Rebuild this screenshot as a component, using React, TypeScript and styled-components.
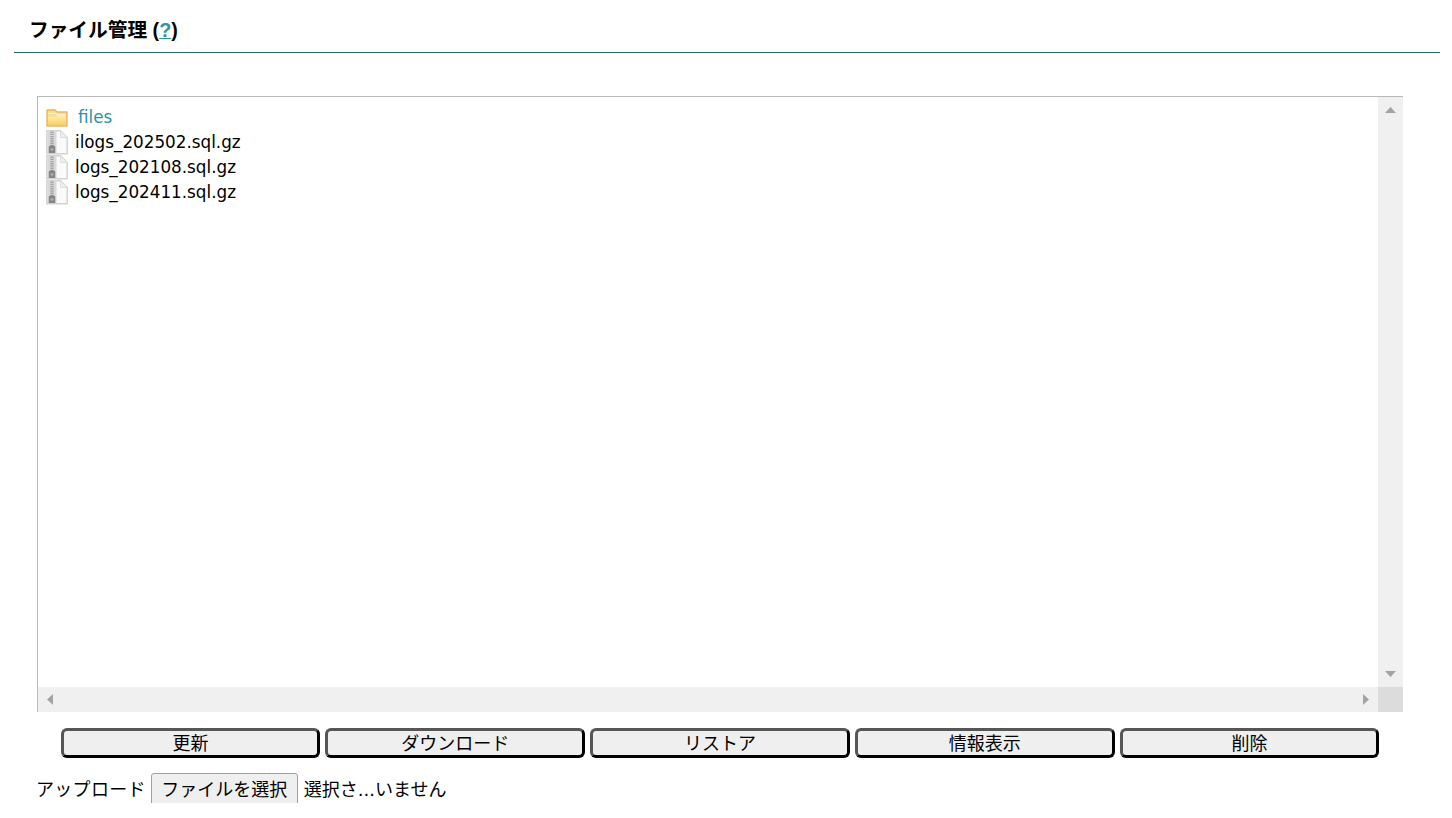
import React from "react";
import styled, { createGlobalStyle } from "styled-components";

const FONT = `"DejaVu Sans", Verdana, "Noto Sans CJK JP", sans-serif`;
const JP = `"Noto Sans CJK JP", "Liberation Sans", sans-serif`;

const Global = createGlobalStyle`
  html, body { margin: 0; padding: 0; background: #fff; overflow: hidden; }
  body { font-family: ${FONT}; color: #000; }
`;

const Page = styled.div`
  width: 1440px;
  height: 818px;
  overflow: hidden;
`;

const Heading = styled.h1`
  margin: 0 0 0 14px;
  height: 52px;
  box-sizing: content-box;
  padding: 0 0 0 15px;
  border-bottom: 1px solid #1f6f68;
  font: 700 19.7px/60px "Liberation Sans", ${JP};
`;

const HelpLink = styled.a`
  color: #2a97a5;
  text-decoration: underline;
`;

const Content = styled.div`
  padding: 43px 37px 0;
  width: 1366px;
`;

const Browser = styled.div`
  display: grid;
  grid-template-columns: 1fr 25px;
  grid-template-rows: 1fr 25px;
  height: 616px;
  box-sizing: border-box;
  border-top: 1px solid #b9b9b9;
  border-left: 1px solid #b9b9b9;
`;

const FileList = styled.ul`
  list-style: none;
  margin: 0;
  padding: 8px 0 0 8px;
`;

const Row = styled.li`
  display: flex;
  align-items: center;
  height: 25px;
  font: 400 16.8px/25px ${FONT};
`;

const FolderName = styled.a`
  margin-left: 10px;
  color: #2a95a3;
`;

const FileName = styled.span`
  margin-left: 7px;
`;

const VBar = styled.div`
  background: #f0f0f0;
  display: flex;
  flex-direction: column;
  justify-content: space-between;
  align-items: center;
  padding: 10px 0 10px;
`;

const HBar = styled.div`
  background: #f0f0f0;
  display: flex;
  justify-content: space-between;
  align-items: center;
  padding: 0 9px;
`;

const Corner = styled.div`
  background: #dcdcdc;
`;

const Buttons = styled.div`
  display: grid;
  grid-template-columns: repeat(5, 259.75px);
  column-gap: 5px;
  padding: 16px 0 0 23.6px;
`;

const ActionButton = styled.button`
  height: 30px;
  padding: 0 0 2px;
  box-sizing: border-box;
  background: #efefef;
  border-style: solid;
  border-width: 3px;
  border-color: #565656 #000 #000 #565656;
  border-radius: 6px;
  font: 400 18px/22px ${JP};
  color: #000;
`;

const Upload = styled.div`
  display: flex;
  align-items: flex-start;
  height: 30px;
  margin-top: 15px;
  overflow: hidden;
  font: 400 18px/30px ${JP};
`;

const UploadLabel = styled.span`
  margin-left: -1px;
  letter-spacing: 0.3px;
`;

const UploadButton = styled.button`
  height: 34px;
  margin: 0 6px 0 5px;
  padding: 0 0 4px;
  width: 147px;
  background: #efefef;
  border: 1px solid #a0a0a0;
  border-radius: 3px;
  font: 400 18px/26px ${JP};
  color: #000;
`;

const UploadStatus = styled.span`
  font-family: ${FONT};
  line-height: 34px;
`;

const Arrow = ({ dir }: { dir: "up" | "down" | "left" | "right" }) => {
  const d = { up: "M5.5 0L11 6H0Z", down: "M0 0H11L5.5 6Z", left: "M6 0V11L0 5.5Z", right: "M0 0V11L6 5.5Z" }[dir];
  const vertical = dir === "up" || dir === "down";
  return (
    <svg width={vertical ? 11 : 6} height={vertical ? 6 : 11} viewBox={vertical ? "0 0 11 6" : "0 0 6 11"}>
      <path d={d} fill="#a3a3a3" />
    </svg>
  );
};

const FolderIcon = () => (
  <svg width="22" height="18" viewBox="0 0 22 18">
    <defs>
      <linearGradient id="fold" x1="0" y1="0" x2="0" y2="1">
        <stop offset="0" stopColor="#fdf0b8" />
        <stop offset="1" stopColor="#f9d064" />
      </linearGradient>
    </defs>
    <path d="M1 1H9L11 3H21V17H1Z" fill="#f8dc98" stroke="#efb25f" strokeWidth="1.4" strokeLinejoin="round" />
    <path d="M2 8H10L12 6H20V16H2Z" fill="url(#fold)" />
    <path d="M2.2 4.5H9.5L11 5.5H19.8" stroke="#fdf3d2" strokeWidth="1.2" fill="none" />
  </svg>
);

const ZipIcon = () => (
  <svg width="22" height="25" viewBox="0 0 22 25">
    <path d="M0.8 0.8H14.5L21.2 7.5V23.8H0.8Z" fill="#fafafa" stroke="#d2d2d2" strokeWidth="1.4" />
    <path d="M14.5 1V7.5H21" fill="#efefef" stroke="#dedede" />
    <path d="M1.5 1.5H10.5V23H1.5Z" fill="#d9d9d9" />
    <path d="M6 1.5V15" stroke="#a6a6a6" strokeWidth="3.4" strokeDasharray="1.4 0.8" />
    <path d="M2.8 17C2.8 16 4 15 6 15C8 15 9.2 16 9.2 17V23H2.8Z" fill="#858585" />
    <path d="M4.6 18.5H7.4V20.5H4.6Z" fill="#b5b5b5" />
  </svg>
);

const files = ["ilogs_202502.sql.gz", "logs_202108.sql.gz", "logs_202411.sql.gz"];
const actions = ["更新", "ダウンロード", "リストア", "情報表示", "削除"];

export default function App() {
  return (
    <Page>
      <Global />
      <Heading>
        ファイル管理 (<HelpLink>?</HelpLink>)
      </Heading>
      <Content>
        <Browser>
          <FileList>
            <Row>
              <FolderIcon />
              <FolderName>files</FolderName>
            </Row>
            {files.map((f) => (
              <Row key={f}>
                <ZipIcon />
                <FileName>{f}</FileName>
              </Row>
            ))}
          </FileList>
          <VBar>
            <Arrow dir="up" />
            <Arrow dir="down" />
          </VBar>
          <HBar>
            <Arrow dir="left" />
            <Arrow dir="right" />
          </HBar>
          <Corner />
        </Browser>
        <Buttons>
          {actions.map((a) => (
            <ActionButton key={a}>{a}</ActionButton>
          ))}
        </Buttons>
        <Upload>
          <UploadLabel>アップロード</UploadLabel>
          <UploadButton>ファイルを選択</UploadButton>
          <UploadStatus>選択さ...いません</UploadStatus>
        </Upload>
      </Content>
    </Page>
  );
}
